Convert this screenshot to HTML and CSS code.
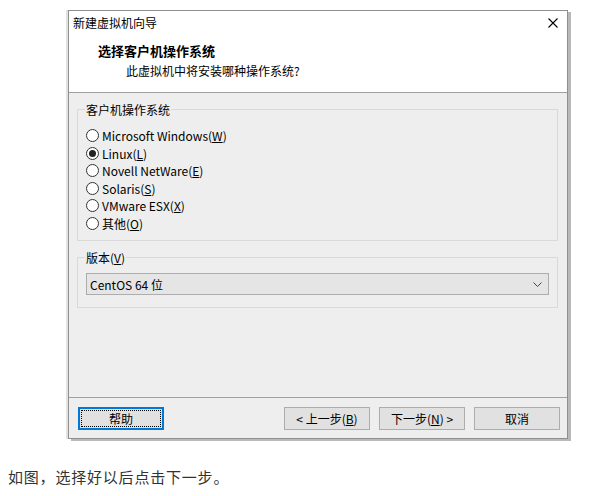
FILE: index.html
```html
<!DOCTYPE html>
<html lang="zh">
<head>
<meta charset="utf-8">
<link rel="stylesheet" href="styles.css">
</head>
<body>
<div class="page">
  <div class="window">
    <div class="top">
      <div class="titlebar">
        <span class="title">新建虚拟机向导</span>
        <svg class="close" width="10" height="10" viewBox="0 0 10 10"><path d="M0.5 0.5L9.5 9.5M9.5 0.5L0.5 9.5" stroke="#000" stroke-width="1.1" fill="none"/></svg>
      </div>
      <div class="header">
        <div class="h-title">选择客户机操作系统</div>
        <div class="h-sub">此虚拟机中将安装哪种操作系统?</div>
      </div>
    </div>
    <div class="content">
      <fieldset class="group">
        <legend>客户机操作系统</legend>
        <div class="radios">
          <div class="radio"><span class="dot"></span><span>Microsoft Windows(<u>W</u>)</span></div>
          <div class="radio"><span class="dot on"></span><span>Linux(<u>L</u>)</span></div>
          <div class="radio"><span class="dot"></span><span>Novell NetWare(<u>E</u>)</span></div>
          <div class="radio"><span class="dot"></span><span>Solaris(<u>S</u>)</span></div>
          <div class="radio"><span class="dot"></span><span>VMware ESX(<u>X</u>)</span></div>
          <div class="radio"><span class="dot"></span><span>其他(<u>O</u>)</span></div>
        </div>
      </fieldset>
      <fieldset class="group group2">
        <legend>版本(<u>V</u>)</legend>
        <div class="select">
          <span>CentOS 64 位</span>
          <svg class="chev" width="9" height="5" viewBox="0 0 9 5"><path d="M0.5 0.5L4.5 4.5L8.5 0.5" stroke="#444" stroke-width="1" fill="none"/></svg>
        </div>
      </fieldset>
    </div>
    <div class="footer">
      <button class="btn help"><span class="focus">帮助</span></button>
      <div class="spacer"></div>
      <button class="btn">&lt; 上一步(<u>B</u>)</button>
      <button class="btn">下一步(<u>N</u>) &gt;</button>
      <button class="btn">取消</button>
    </div>
  </div>
  <p class="caption">如图，选择好以后点击下一步。</p>
</div>
</body>
</html>
```
FILE: styles.css
```css
* { box-sizing: border-box; }
html, body { margin: 0; padding: 0; background: #fff; }
body { font-family: "Noto Sans CJK SC", "Noto Sans", sans-serif; font-size: 12px; color: #000; }

.window {
  margin: 10px 0 0 68px;
  width: 500px;
  height: 429px;
  border: 1px solid #8f8f8f;
  background: #eeeeee;
  box-shadow: -2px 0 0 #e2e2e2, 3px 2px 0 #b9b9b9;
  display: flex;
  flex-direction: column;
}
.top {
  background: #fff;
  height: 82px;
  border-bottom: 1px solid #a0a0a0;
}
.titlebar {
  height: 24px;
  display: flex;
  align-items: center;
  justify-content: space-between;
  padding: 0 9px 0 4px;
}
.title { line-height: 24px; }
.header { padding-top: 6px; }
.h-title { font-weight: bold; font-size: 13px; line-height: 20px; padding-left: 29px; }
.h-sub { line-height: 20px; padding-left: 57px; }

.content {
  height: 305px;
  border-bottom: 1px solid #a0a0a0;
  padding: 8px 9px 0 8px;
}
.group {
  margin: 0;
  border: 1px solid #d9d9d9;
  padding: 9px 8px 8px 8px;
  min-width: 0;
}
.group legend {
  padding: 0 1px;
  margin-left: -1px;
  line-height: 17px;
}
.radios { display: flex; flex-direction: column; }
.radio { display: flex; align-items: center; height: 17.5px; gap: 3px; }
.dot {
  width: 13px; height: 13px;
  border: 1px solid #333;
  border-radius: 50%;
  background: #fff;
  display: flex; align-items: center; justify-content: center;
}
.dot.on::after {
  content: "";
  width: 7px; height: 7px;
  border-radius: 50%;
  background: #222;
}
.group2 { margin-top: 8px; padding: 7px 8px 12px 8px; }
.select {
  height: 22px;
  border: 1px solid #adadad;
  background: #e5e5e5;
  display: flex;
  align-items: center;
  justify-content: space-between;
  padding: 0 6px 0 3px;
}

.footer {
  flex: 1;
  display: flex;
  align-items: flex-start;
  padding: 9px 7px 0 9px;
  gap: 9px;
}
.spacer { flex: 1; }
.btn {
  width: 86px; height: 23px;
  border: 1px solid #adadad;
  background: #e1e1e1;
  font: inherit;
  color: #000;
  padding: 0;
  display: flex; align-items: center; justify-content: center;
}
.btn.help { border: 2px solid #0078d7; padding: 1px; }
.focus {
  width: 100%; height: 100%;
  border: 1px dotted #000;
  display: flex; align-items: center; justify-content: center;
}
.caption {
  margin: 26px 0 0 0;
  padding-left: 8px;
  font-size: 15px;
  line-height: 24px;
  letter-spacing: 0.8px;
  color: #333;
}
```
